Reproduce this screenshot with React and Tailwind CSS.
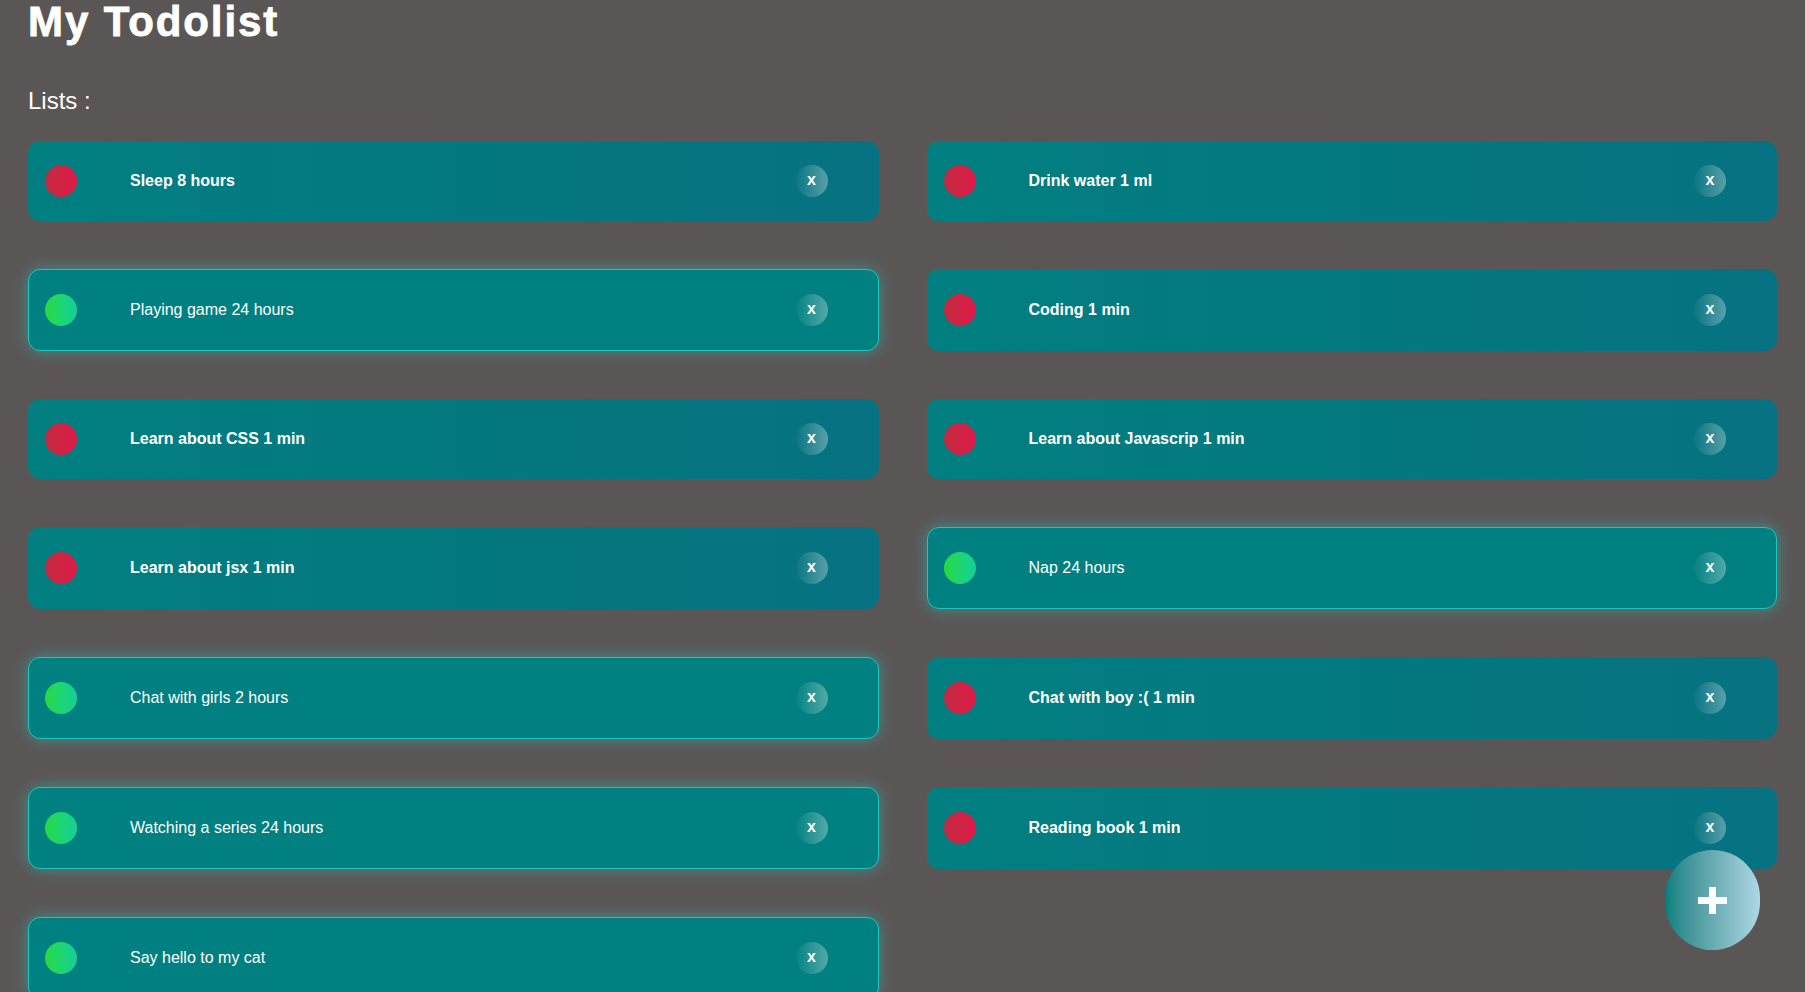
import React from "react";

const items = [
  { t: "Sleep 8 hours", done: false },
  { t: "Drink water 1 ml", done: false },
  { t: "Playing game 24 hours", done: true },
  { t: "Coding 1 min", done: false },
  { t: "Learn about CSS 1 min", done: false },
  { t: "Learn about Javascrip 1 min", done: false },
  { t: "Learn about jsx 1 min", done: false },
  { t: "Nap 24 hours", done: true },
  { t: "Chat with girls 2 hours", done: true },
  { t: "Chat with boy :( 1 min", done: false },
  { t: "Watching a series 24 hours", done: true },
  { t: "Reading book 1 min", done: false },
  { t: "Say hello to my cat", done: true },
];

function Card({ t, done }) {
  return (
    <div
      className={
        done
          ? "flex items-center rounded-[12px] border border-[#1fc6c0] bg-[#008080] pl-[16px] pr-[50px] min-h-[82px] shadow-[0_0_16px_rgba(30,215,205,0.45)]"
          : "flex items-center rounded-[12px] bg-gradient-to-r from-[#017f80] to-[#077281] pl-[17px] pr-[51px] min-h-[80px]"
      }
    >
      <div
        className={
          done
            ? "w-8 h-8 rounded-full bg-gradient-to-r from-[#28da38] to-[#16cf98] shrink-0"
            : "w-8 h-8 rounded-full bg-gradient-to-r from-[#c22a40] to-[#de1848] shrink-0"
        }
      />
      <div className={"ml-[53px] flex-1 text-[16px] " + (done ? "font-normal" : "font-bold")}>{t}</div>
      <div className="w-8 h-8 rounded-full bg-gradient-to-r from-[rgba(255,255,255,0.02)] to-[rgba(255,255,255,0.32)] flex items-center justify-center text-[16px] font-bold leading-none pb-[2px]">
        x
      </div>
    </div>
  );
}

export default function App() {
  return (
    <div className="h-screen overflow-hidden bg-[#5b5656] px-[28px] text-white font-['Liberation_Sans',Arial,sans-serif]">
      <h1 className="text-[42px] font-bold leading-none pt-[1px] tracking-[1.9px] [-webkit-text-stroke:0.8px_white]">
        My Todolist
      </h1>
      <div className="mt-[44px] text-[24px] leading-[28px]">Lists :</div>
      <div className="mt-[26px] grid grid-cols-2 gap-x-[48px] gap-y-[48px]">
        {items.map((it, i) => (
          <Card key={i} {...it} />
        ))}
      </div>
      <button className="fixed right-[45px] bottom-[42px] w-[95px] h-[100px] rounded-full bg-gradient-to-r from-[#008080] to-[#add8e6] flex items-center justify-center">
        <span className="relative block w-[29px] h-[27px]">
          <span className="absolute left-0 top-[10px] w-[29px] h-[7px] bg-white" />
          <span className="absolute left-[11px] top-0 w-[7px] h-[27px] bg-white" />
        </span>
      </button>
    </div>
  );
}
